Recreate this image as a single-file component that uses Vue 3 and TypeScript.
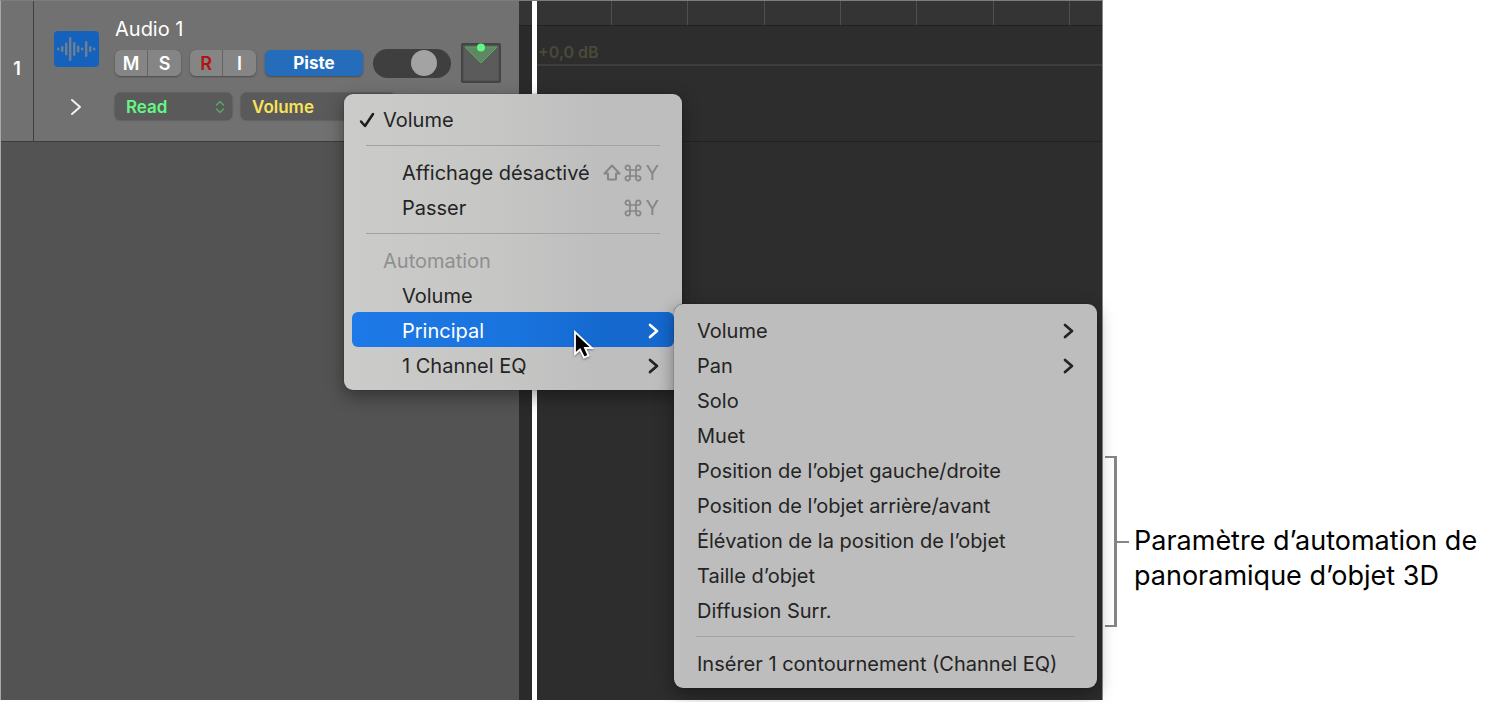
<script setup lang="ts">
import { ref } from 'vue'

interface Entry {
  kind: 'item' | 'separator' | 'heading'
  label?: string
  level?: number
  checked?: boolean
  shortcut?: string[]
  submenu?: boolean
  active?: boolean
}

const mainMenu: Entry[] = [
  { kind: 'item', label: 'Volume', level: 1, checked: true },
  { kind: 'separator' },
  { kind: 'item', label: 'Affichage désactivé', level: 2, shortcut: ['shift', 'cmd'] },
  { kind: 'item', label: 'Passer', level: 2, shortcut: ['cmd'] },
  { kind: 'separator' },
  { kind: 'heading', label: 'Automation', level: 1 },
  { kind: 'item', label: 'Volume', level: 2 },
  { kind: 'item', label: 'Principal', level: 2, submenu: true, active: true },
  { kind: 'item', label: '1 Channel EQ', level: 2, submenu: true },
]

const subMenu: Entry[] = [
  { kind: 'item', label: 'Volume', submenu: true },
  { kind: 'item', label: 'Pan', submenu: true },
  { kind: 'item', label: 'Solo' },
  { kind: 'item', label: 'Muet' },
  { kind: 'item', label: 'Position de l’objet gauche/droite' },
  { kind: 'item', label: 'Position de l’objet arrière/avant' },
  { kind: 'item', label: 'Élévation de la position de l’objet' },
  { kind: 'item', label: 'Taille d’objet' },
  { kind: 'item', label: 'Diffusion Surr.' },
  { kind: 'separator' },
  { kind: 'item', label: 'Insérer 1 contournement (Channel EQ)' },
]

const wave = [
  { x: 4, h: 3 }, { x: 8, h: 6 }, { x: 12, h: 13 }, { x: 16, h: 24 }, { x: 20, h: 14 },
  { x: 24, h: 7 }, { x: 28, h: 3 }, { x: 32, h: 16 }, { x: 36, h: 6 }, { x: 40, h: 3 },
]

const level = ref(73)
const mode = ref('Read')
const parameter = ref('Volume')
</script>

<template>
  <div class="page">
    <main class="window">
      <section class="tracks">
        <div class="track">
          <div class="number">1</div>
          <div class="side">
            <svg class="audio-icon" viewBox="0 0 45 36" aria-hidden="true">
              <rect width="45" height="36" rx="4" fill="#1562bd" />
              <rect v-for="b in wave" :key="b.x" :x="b.x - 1" :y="18 - b.h / 2" width="2.4" :height="b.h" rx="1.2" fill="#6f7f92" />
            </svg>
            <button class="disclose" aria-label="Afficher les sous-pistes">
              <svg viewBox="0 0 12 18"><path d="M2 2l8 7-8 7" fill="none" stroke="#f2f2f2" stroke-width="2" stroke-linecap="round" stroke-linejoin="round" /></svg>
            </button>
          </div>
          <div class="controls">
            <div class="name">Audio 1</div>
            <div class="row">
              <div class="buttons">
                <div class="pair"><button>M</button><button>S</button></div>
                <div class="pair"><button class="record">R</button><button>I</button></div>
                <button class="piste">Piste</button>
              </div>
              <input v-model="level" class="slider" type="range" min="0" max="100" aria-label="Volume de la piste" />
              <svg class="panner" viewBox="0 0 40 40" aria-hidden="true">
                <rect x="1" y="1" width="38" height="38" rx="2" fill="#5b5b5b" stroke="#454545" stroke-width="2.5" />
                <path d="M4 4H36L20 20Z" fill="#5e8763" stroke="#57a564" stroke-width="1" />
                <circle cx="20" cy="4.500" r="4" fill="#62f884" />
              </svg>
            </div>
            <div class="automation">
              <div class="popup mode">
                <select v-model="mode" aria-label="Mode d’automation"><option>Read</option></select>
                <svg viewBox="0 0 10 14"><path d="M1.500 5L5 1.500 8.500 5M1.500 9L5 12.500 8.500 9" fill="none" stroke="#55a865" stroke-width="1.500" stroke-linecap="round" stroke-linejoin="round" /></svg>
              </div>
              <div class="popup parameter">
                <select v-model="parameter" aria-label="Paramètre d’automation"><option>Volume</option></select>
              </div>
            </div>
          </div>
        </div>
      </section>
      <div class="gutter"><div class="gutter-ruler"></div></div>
      <div class="playhead"></div>
      <section class="timeline">
        <div class="ruler"><span v-for="n in 8" :key="n"></span></div>
        <div class="lane"><div class="gain">+0,0 dB</div></div>
      </section>

      <div class="menu main-menu" role="menu">
        <template v-for="(e, i) in mainMenu" :key="i">
          <hr v-if="e.kind === 'separator'" />
          <div v-else-if="e.kind === 'heading'" class="entry level1 heading">{{ e.label }}</div>
          <button v-else class="entry" :class="['level' + e.level, { active: e.active }]" role="menuitem">
            <svg v-if="e.checked" class="check" viewBox="0 0 16 16"><path d="M2 9.500L6 14 14 2" fill="none" stroke="#1c1c1c" stroke-width="2.500" stroke-linecap="round" stroke-linejoin="round" /></svg>
            <span class="label">{{ e.label }}</span>
            <span v-if="e.shortcut" class="shortcut">
              <template v-for="k in e.shortcut" :key="k">
                <svg v-if="k === 'shift'" viewBox="0 0 18 18"><path d="M9 1.500L16.500 9.500H13V15.500H5V9.500H1.500Z" fill="none" stroke="currentColor" stroke-width="1.900" stroke-linejoin="round" /></svg>
                <svg v-else viewBox="0 0 18 18"><path d="M6 6H12V12H6ZM6 6H3.800A2.300 2.300 0 1 1 6 3.800ZM12 6V3.800A2.300 2.300 0 1 1 14.200 6ZM12 12H14.200A2.300 2.300 0 1 1 12 14.200ZM6 12V14.200A2.300 2.300 0 1 1 3.800 12Z" fill="none" stroke="currentColor" stroke-width="1.700" /></svg>
              </template>
              <span>Y</span>
            </span>
            <svg v-if="e.submenu" class="arrow" viewBox="0 0 12 16"><path d="M3 2l7 6-7 6" fill="none" stroke="currentColor" stroke-width="2.700" stroke-linecap="round" stroke-linejoin="round" /></svg>
          </button>
        </template>
        <svg class="pointer" viewBox="0 0 22 30" aria-hidden="true">
          <path d="M2 2V24L7 19.500 11 27.500 15.500 25.500 12 18H19Z" fill="#000" stroke="#fff" stroke-width="1.800" stroke-linejoin="miter" />
        </svg>
      </div>

      <div class="menu sub-menu" role="menu">
        <template v-for="(e, i) in subMenu" :key="i">
          <hr v-if="e.kind === 'separator'" />
          <button v-else class="entry" role="menuitem">
            <span class="label">{{ e.label }}</span>
            <svg v-if="e.submenu" class="arrow" viewBox="0 0 12 16"><path d="M3 2l7 6-7 6" fill="none" stroke="currentColor" stroke-width="2.700" stroke-linecap="round" stroke-linejoin="round" /></svg>
          </button>
        </template>
      </div>
    </main>

    <aside class="note">
      <div class="callout">
        <div class="bracket"></div>
        <div class="tick"></div>
        <p>Paramètre d’automation de panoramique d’objet 3D</p>
      </div>
    </aside>
  </div>
</template>

<style>
body { background: #fff; }
</style>

<style scoped>
.page {
  display: flex;
  min-height: 100vh;
  box-sizing: border-box;
  padding-bottom: 2px;
  font-family: Inter, "Liberation Sans", sans-serif;
}
button, select { font: inherit; border: 0; margin: 0; padding: 0; background: none; }
svg { display: block; flex: none; }

.window {
  position: relative;
  flex: 1;
  display: flex;
  box-sizing: border-box;
  border-top: 1px solid #7c7c7c;
  border-left: 1px solid #a8a8a8;
  border-right: 1px solid #8a8a8a;
  background: #2d2d2d;
}
.tracks { width: 518px; flex: none; background: #535353; }
.track {
  display: flex;
  height: 140px;
  border-bottom: 1px solid #3c3c3c;
  background: #717171;
  color: #fff;
}
.number {
  width: 32px;
  border-right: 1px solid #404040;
  line-height: 136px;
  text-align: center;
  font-size: 18px;
  font-weight: 600;
}
.side { box-sizing: border-box; width: 84px; padding-top: 30px; display: flex; flex-direction: column; align-items: center; gap: 31px; }
.audio-icon { width: 45px; height: 36px; }
.disclose svg { width: 12px; height: 18px; }
.controls { flex: 1; padding-top: 15px; margin-left: -3px; }
.name { font-size: 20px; line-height: 26px; }
.row { display: flex; align-items: center; gap: 10px; height: 42px; }
.buttons { display: flex; gap: 9px; }
.pair { display: flex; gap: 1px; border-radius: 6px; overflow: hidden; background: #646464; box-shadow: 0 1px 2px #4a4a4a; }
.pair button { width: 33px; height: 26px; background: #858585; color: #fff; font-size: 18px; font-weight: 600; }
.pair button:first-child { width: 32px; }
.pair .record { color: #ad1510; }
.piste { width: 98px; height: 26px; border-radius: 6px; background: #256dba; color: #fff; font-size: 17px; font-weight: 700; box-shadow: 0 1px 2px #4a4a4a; }
.slider { appearance: none; width: 78px; height: 29px; margin: 0; border-radius: 15px; background: #3f3f3f; }
.slider::-webkit-slider-thumb { appearance: none; width: 26px; height: 26px; border-radius: 50%; background: #a3a3a3; }
.panner { width: 40px; height: 40px; }
.automation { display: flex; gap: 9px; padding-top: 9px; }
.popup { display: flex; align-items: center; height: 27px; border-radius: 6px; background: #5a5a5a; box-shadow: 0 0 2px #3c3c3c; box-sizing: border-box; padding: 0 7px 0 11px; }
.popup select { appearance: none; flex: 1; height: 27px; font-size: 17px; font-weight: 600; }
.popup svg { width: 10px; height: 14px; }
.mode { width: 117px; }
.mode select { color: #62f884; }
.parameter { width: 154px; }
.parameter select { color: #f8e35a; }

.gutter { width: 13px; flex: none; background: #2a2a2a; }
.gutter-ruler { height: 24px; background: #343434; border-bottom: 1px solid #212121; }
.playhead { width: 5px; flex: none; background: #fff; }
.timeline { flex: 1; }
.ruler { display: grid; grid-template-columns: 75px repeat(6, 1fr) 32px; height: 24px; background: #343434; border-bottom: 1px solid #222; }
.ruler span { border-right: 1px solid #505050; }
.ruler span:last-child { border: 0; }
.lane { height: 115px; border-bottom: 1px solid #212121; }
.gain { height: 37px; padding-top: 14px; padding-left: 1px; line-height: 24px; font-size: 16px; font-weight: 600; color: #4b4a38; border-bottom: 2px solid #3d3d3d; box-sizing: content-box; height: 24px; }

.menu { position: absolute; box-sizing: border-box; border-radius: 9px; color: #242424; box-shadow: 0 0 1px #111, 0 6px 18px rgba(0, 0, 0, .4); font-size: 20px; }
.main-menu { left: 343px; top: 93px; width: 338px; padding: 7px 8px 8px; background: linear-gradient(90deg, #cbcbca, #c6c6c5 45%, #bebebe 75%); }
.sub-menu { left: 673px; top: 303px; width: 423px; padding: 8px; background: #bdbdbd; }
.menu hr { height: 1px; margin: 9px 14px 8px; border: 0; background: #a2a2a2; }
.entry { position: relative; display: flex; align-items: center; box-sizing: border-box; width: 100%; height: 35px; padding: 2px 15px 0; border-radius: 6px; color: inherit; text-align: left; white-space: nowrap; }
.label { flex: 1; }
.level1 { padding-left: 31px; }
.level2 { padding-left: 50px; }
.heading { color: #8f8f8f; }
.active { background: linear-gradient(90deg, #1d79e7, #1a74de 50%, #1468ce 80%); color: #fff; }
.check { position: absolute; left: 7px; width: 16px; height: 16px; }
.shortcut { display: flex; align-items: center; gap: 3px; color: #858585; }
.shortcut svg { width: 18px; height: 18px; }
.arrow { width: 12px; height: 16px; }
.pointer { position: absolute; left: 229px; top: 236px; width: 22px; height: 30px; filter: drop-shadow(0 1px 1px rgba(0, 0, 0, .4)); }

.note { width: 389px; flex: none; padding-top: 456px; box-sizing: border-box; }
.callout { display: flex; align-items: center; }
.bracket { width: 12px; height: 171px; margin-left: 2px; box-sizing: border-box; border: 2px solid #858585; border-left: 0; border-right-width: 3px; }
.tick { width: 12px; height: 2px; background: #858585; }
.callout p { flex: 1; margin: 0; padding: 33px 0 0 5px; font-size: 27px; line-height: 35px; color: #000; }
</style>
